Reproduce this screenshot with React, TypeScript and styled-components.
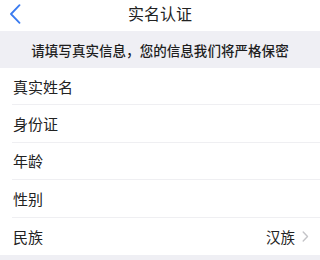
import React from "react";
import styled, { createGlobalStyle } from "styled-components";

const Global = createGlobalStyle`
  html, body { margin: 0; padding: 0; background: #ffffff; }
  body { font-family: "Noto Sans CJK SC", "Noto Sans", sans-serif; }
  * { box-sizing: border-box; }
`;

const Page = styled.div`
  width: 320px;
  height: 260px;
  display: flex;
  flex-direction: column;
  background: #ffffff;
  overflow: hidden;
`;

const NavBar = styled.div`
  height: 31px;
  display: grid;
  grid-template-columns: 40px 1fr 40px;
  align-items: center;
  flex-shrink: 0;
`;

const BackButton = styled.div`
  display: flex;
  align-items: center;
  padding-left: 9px;
  padding-bottom: 3px;
`;

const Title = styled.div`
  text-align: center;
  font-size: 16px;
  color: #222222;
  line-height: 1;
  padding-bottom: 6px;
`;

const Notice = styled.div`
  height: 37px;
  background: #efeff4;
  display: flex;
  align-items: center;
  justify-content: center;
  font-size: 13.5px;
  font-weight: 500;
  color: #1e1e1e;
  flex-shrink: 0;
  letter-spacing: 0.05px;
`;

const List = styled.div`
  display: flex;
  flex-direction: column;
  padding-left: 12px;
  background: #ffffff;
  flex-shrink: 0;
`;

const Row = styled.div<{ $last?: boolean }>`
  height: 37.4px;
  display: flex;
  align-items: center;
  justify-content: space-between;
  border-bottom: ${(p) => (p.$last ? "none" : "1px solid #efeff2")};
  padding-right: 11px;
`;

const Label = styled.span`
  font-size: 15px;
  color: #222222;
  padding-left: 1px;
`;

const Value = styled.span`
  display: flex;
  align-items: center;
  gap: 7px;
  font-size: 14.5px;
  color: #222222;
`;

const Footer = styled.div`
  flex: 1;
  background: #efeff4;
`;

const rows = ["真实姓名", "身份证", "年龄", "性别"];

export default function App() {
  return (
    <>
      <Global />
      <Page>
        <NavBar>
          <BackButton>
            <svg width="12" height="20" viewBox="0 0 12 20" fill="none">
              <path d="M10.5 1.2 L2 10 L10.5 18.8" stroke="#3a7bf0" strokeWidth="1.8" strokeLinecap="round" strokeLinejoin="round" />
            </svg>
          </BackButton>
          <Title>实名认证</Title>
          <div />
        </NavBar>
        <Notice>请填写真实信息，您的信息我们将严格保密</Notice>
        <List>
          {rows.map((r) => (
            <Row key={r}>
              <Label>{r}</Label>
            </Row>
          ))}
          <Row $last>
            <Label>民族</Label>
            <Value>
              汉族
              <svg width="7" height="11" viewBox="0 0 7 11" fill="none">
                <path d="M1.2 1 L5.5 5.5 L1.2 10" stroke="#c4c4c8" strokeWidth="1.4" strokeLinecap="round" strokeLinejoin="round" />
              </svg>
            </Value>
          </Row>
        </List>
        <Footer />
      </Page>
    </>
  );
}
